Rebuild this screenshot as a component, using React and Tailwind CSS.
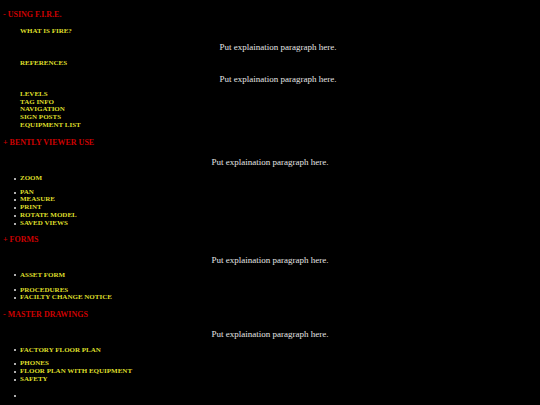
import React from "react";

const serif = { fontFamily: '"Liberation Serif", "Times New Roman", serif' };

const Heading = ({ children, className = "" }) => (
  <div className={`pl-[3px] text-[8px] leading-[9px] font-bold text-[#cc0000] ${className}`}>
    {children}
  </div>
);

const Para = ({ className = "" }) => (
  <div className={`text-center text-[9px] leading-[10px] text-[#e4e4e4] ${className}`}>
    Put explaination paragraph here.
  </div>
);

const Item = ({ children, bullet }) => (
  <div className="flex items-center h-[7.75px] text-[7px] leading-[7.75px] font-bold text-[#dede2a]">
    {bullet ? (
      <span className="w-[6px] flex justify-start">
        <span className="block w-[2px] h-[2px] rounded-full bg-[#e8e8e8]" />
      </span>
    ) : null}
    <span>{children}</span>
  </div>
);

// lists are nudged ~0.8px lower than their line boxes: caps sit above the box centre
const List = ({ items, bullet, className = "" }) => (
  <div className={`flex flex-col pt-[0.8px] mb-[-0.8px] ${bullet ? "pl-[14px]" : "pl-[20px]"} ${className}`}>
    {items.map((t, i) => (
      <Item key={i} bullet={bullet}>
        {t}
      </Item>
    ))}
  </div>
);

export default function App() {
  return (
    <main style={serif} className="w-[540px] h-[405px] overflow-hidden bg-black pt-[9.5px]">
      <Heading>- USING F.I.R.E.</Heading>
      <List className="mt-[8.6px]" items={["WHAT IS FIRE?"]} />
      <Para className="mt-[7.1px] ml-[16px]" />
      <List className="mt-[7.1px]" items={["REFERENCES"]} />
      <Para className="mt-[7.1px] ml-[16px]" />
      <List
        className="mt-[6.1px]"
        items={["LEVELS", "TAG INFO", "NAVIGATION", "SIGN POSTS", "EQUIPMENT LIST"]}
      />

      <Heading className="mt-[9.6px]">+ BENTLY VIEWER USE</Heading>
      <Para className="mt-[9.5px]" />
      <List bullet className="mt-[7.1px]" items={["ZOOM"]} />
      <List
        bullet
        className="mt-[6.2px]"
        items={["PAN", "MEASURE", "PRINT", "ROTATE MODEL", "SAVED VIEWS"]}
      />

      <Heading className="mt-[8.6px]">+ FORMS</Heading>
      <Para className="mt-[10.5px]" />
      <List bullet className="mt-[6.1px]" items={["ASSET FORM"]} />
      <List bullet className="mt-[7.2px]" items={["PROCEDURES", "FACILTY CHANGE NOTICE"]} />

      <Heading className="mt-[8.9px]">- MASTER DRAWINGS</Heading>
      <Para className="mt-[9.5px]" />
      <List bullet className="mt-[7.1px]" items={["FACTORY FLOOR PLAN"]} />
      <List
        bullet
        className="mt-[6.2px]"
        items={["PHONES", "FLOOR PLAN WITH EQUIPMENT", "SAFETY"]}
      />
      <List bullet className="mt-[8.7px]" items={[""]} />
    </main>
  );
}
